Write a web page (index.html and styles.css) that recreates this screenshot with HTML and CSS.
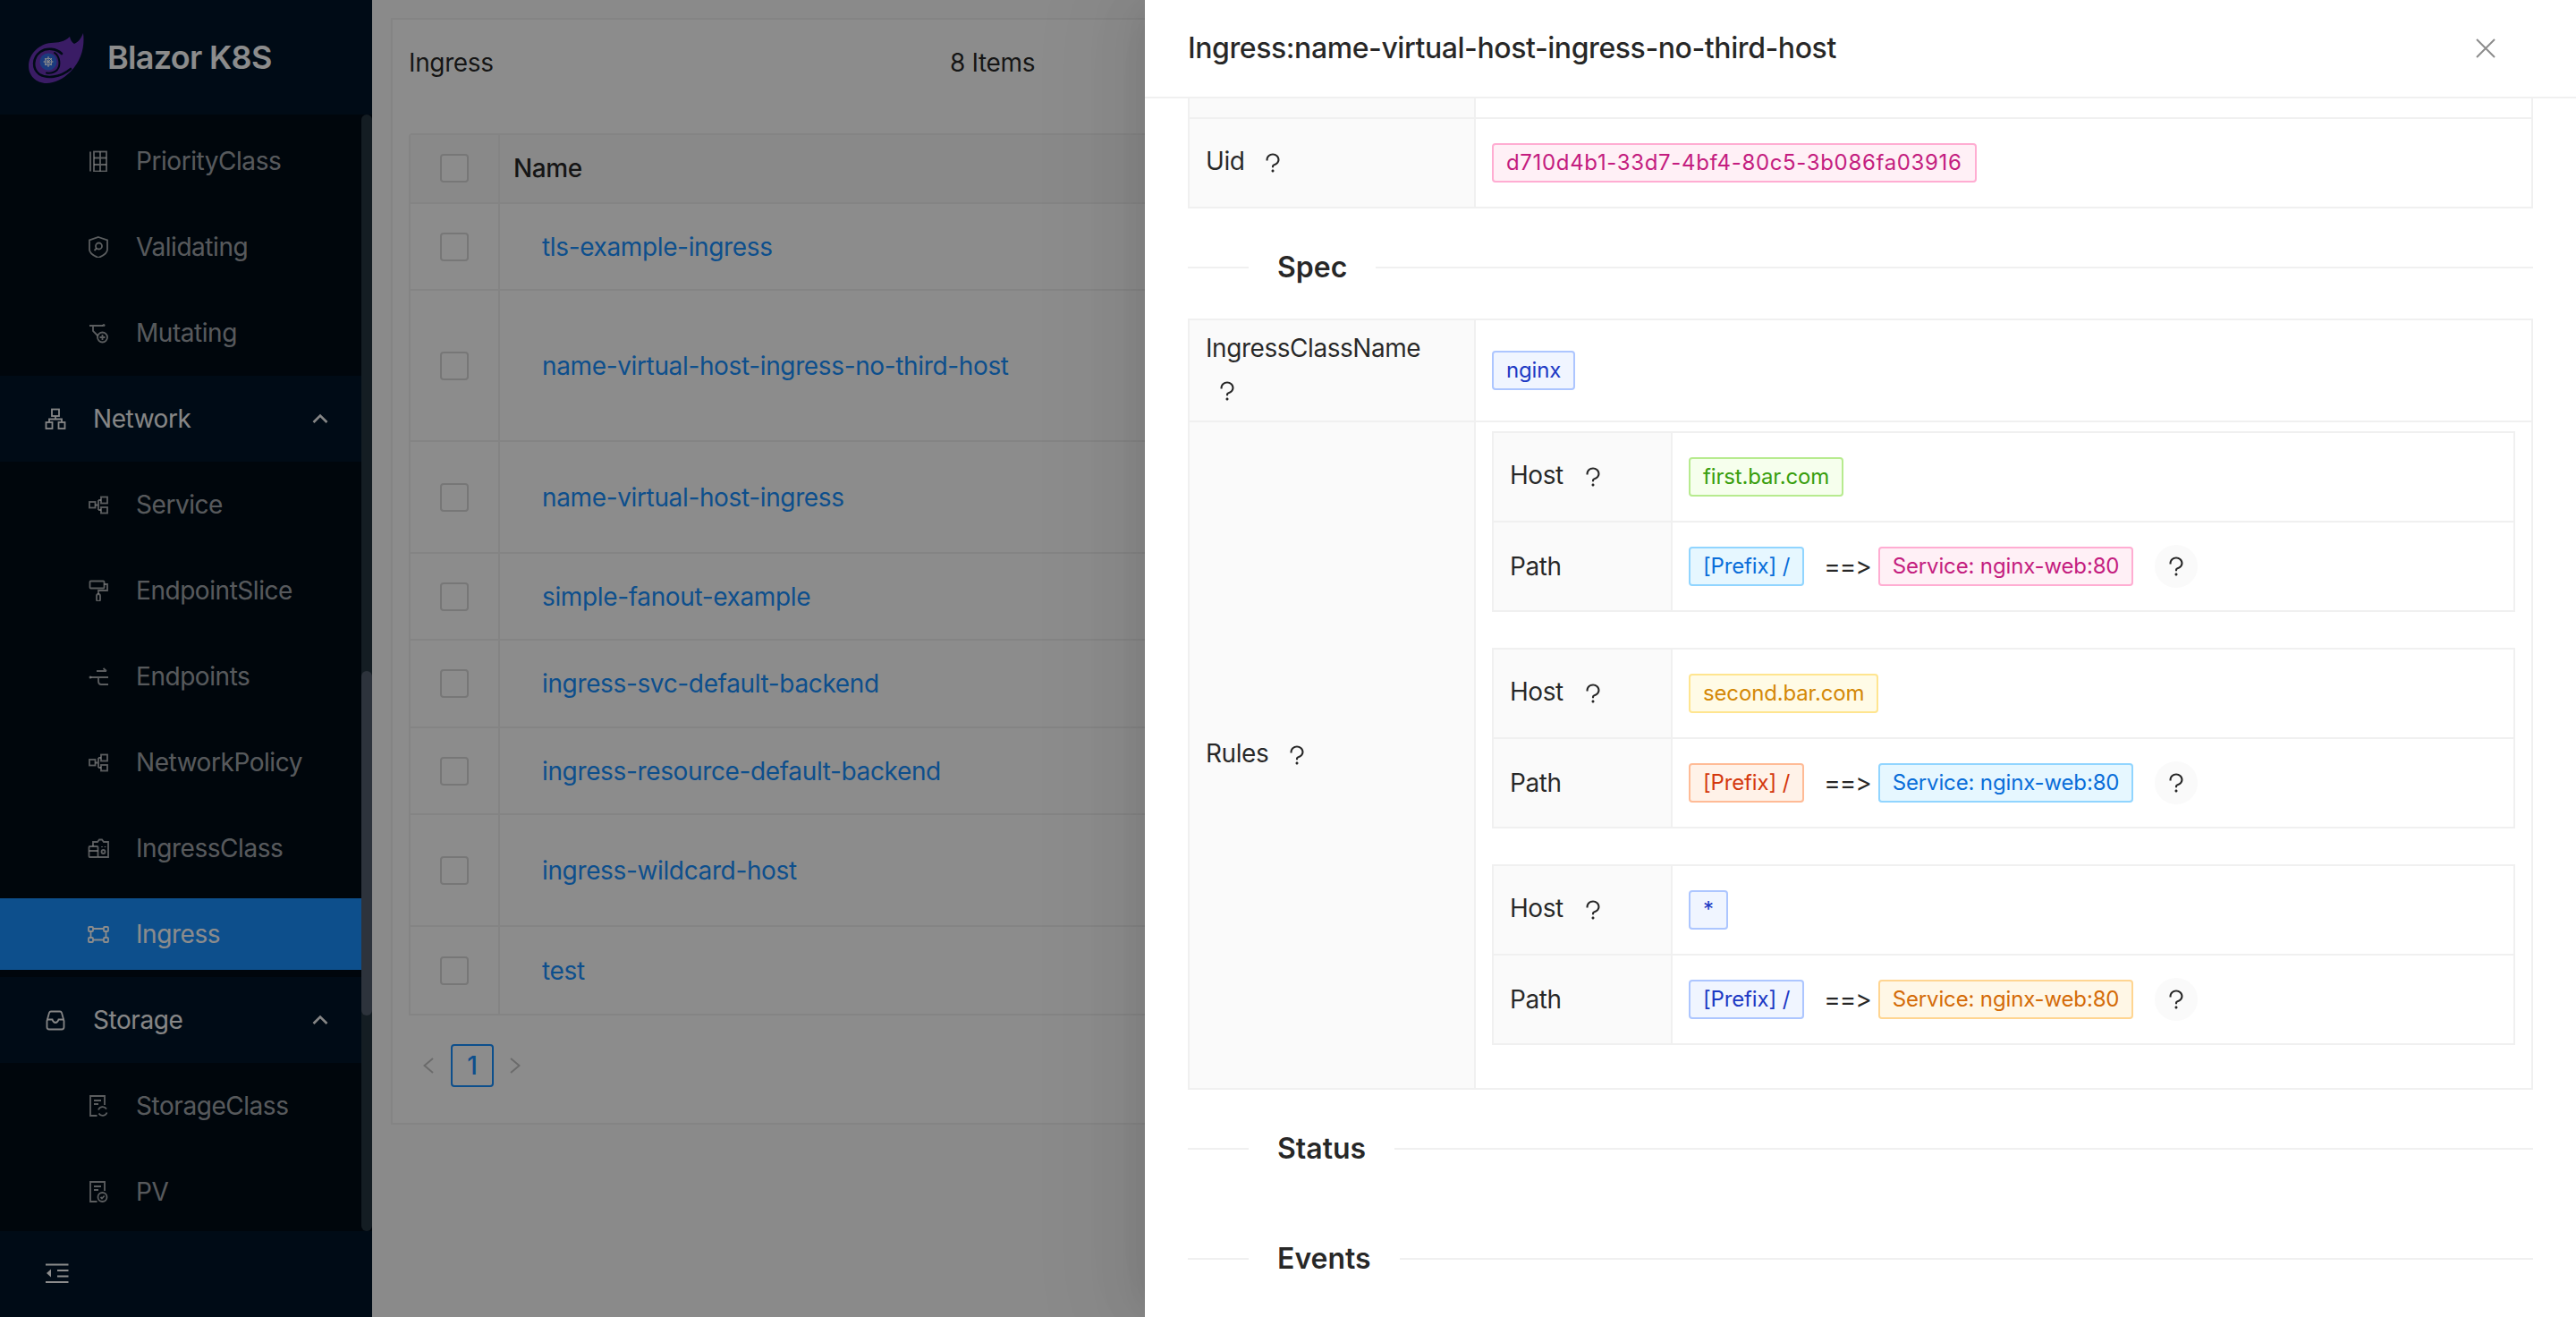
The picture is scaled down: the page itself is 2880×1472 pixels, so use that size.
FILE: index.html
```html
<!DOCTYPE html>
<html lang="en">
<head>
<meta charset="utf-8">
<title>Blazor K8S</title>
<link rel="stylesheet" href="styles.css">
</head>
<body>
<svg class="defs" width="0" height="0" aria-hidden="true">
  <defs>
    <symbol id="i-partition" viewBox="0 0 24 24"><rect x="2" y="9" width="6.5" height="6.5"/><rect x="15" y="3.5" width="7" height="7"/><rect x="15" y="15" width="7" height="6.5"/><path d="M8.5 12.5H12M12 7V18M12 7H15M12 18H15"/></symbol>
    <symbol id="q" viewBox="0 0 1024 1024"><path d="M764 280.9c-14-30.6-33.9-58.1-59.3-81.6C653.1 151.4 584.6 125 512 125s-141.1 26.4-192.7 74.2c-25.4 23.6-45.3 51-59.3 81.7-14.6 32-22 65.9-22 100.9v27c0 6.2 5 11.2 11.2 11.2h54c6.2 0 11.2-5 11.2-11.2v-27c0-99.5 88.6-180.4 197.6-180.4s197.6 80.9 197.6 180.4c0 40.8-14.5 79.2-42 111.2-27.2 31.7-65.6 54.4-108.1 64-24.3 5.5-46.2 19.2-61.7 38.8a110.85 110.85 0 0 0-23.9 68.6v31.4c0 6.2 5 11.2 11.2 11.2h54c6.2 0 11.2-5 11.2-11.2v-31.4c0-15.7 10.9-29.5 26-32.9 58.4-13.2 111.4-44.7 149.3-88.7 19.1-22.3 34-47.1 44.3-74 10.7-27.9 16.1-57.2 16.1-87 0-35-7.4-69-22-101zM512 787c-30.9 0-56 25.1-56 56s25.1 56 56 56 56-25.1 56-56-25.1-56-56-56z"/></symbol>
  </defs>
</svg>
<div class="app">
  <aside class="sider">
    <div class="brand">
      <svg class="logo" viewBox="7 7 62 56">
        <path class="logo-body" d="M68 7C70 22 66 38 54 50C46 58 36 63 27 63C15 63 7 54 7 44C7 30 19 19 32 18C40 17.5 47 17 53 11C54 15 55 17 58 19C63 17 66 12 68 7Z"/>
        <path class="logo-gap" d="M44 30C38 24 27 23 20 28C11 35 11 47 19 53C27 58 42 57 54 47"/>
        <path class="logo-gap thin" d="M36 29C42 33 43 43 39 48C36 51 31 52 27 51.500"/>
        <circle class="logo-k8s" cx="29" cy="39" r="9.500"/>
        <g class="logo-wheel"><circle cx="29" cy="39" r="4"/><path d="M29 33V45M23.500 39H34.500M25 35L33 43M33 35L25 43"/></g>
      </svg>
      <span class="brand-name">Blazor K8S</span>
    </div>
    <nav class="menu">
      <div class="sub sub-first">
        <a class="item"><svg class="ico" viewBox="0 0 24 24"><path d="M3 1.500V23.500"/><rect x="7" y="1.500" width="14" height="22"/><path d="M14 1.500V23.500M7 8.500H21M7 16H21"/></svg>PriorityClass</a>
        <a class="item"><svg class="ico" viewBox="0 0 24 24"><path d="M12 1L22 4.500V15C22 19 17 22 12 24C7 22 2 19 2 15V4.500Z"/><circle cx="12.500" cy="11" r="3.500"/><path d="M10 13.500L7.500 16"/></svg>Validating</a>
        <a class="item"><svg class="ico" viewBox="0 0 24 24"><path d="M2 4H17M6 4V10L11 15"/><circle class="dot" cx="18" cy="3.500" r="1.500"/><circle cx="16.500" cy="17" r="5.500"/><path d="M13.500 17H19.500M16.500 14V20"/></svg>Mutating</a>
      </div>
      <div class="parent"><div class="parent-in"><svg class="ico" viewBox="0 0 24 24"><rect x="8" y="1.500" width="8" height="7.500"/><rect x="1.500" y="16" width="7" height="7"/><rect x="15.500" y="16" width="7" height="7"/><path d="M12 9V12.500M5 16V12.500H19V16"/></svg><span class="parent-label">Network</span><svg class="chev" viewBox="0 0 18 12"><path d="M1.500 10L9 2.500L16.500 10"/></svg></div></div>
      <div class="sub">
        <a class="item"><svg class="ico"><use href="#i-partition"/></svg>Service</a>
        <a class="item"><svg class="ico" viewBox="0 0 24 24"><rect x="2.500" y="1.500" width="16" height="8" rx="1"/><path d="M18.500 5H22V12H12V16"/><rect x="10" y="16" width="4" height="8" rx="2"/></svg>EndpointSlice</a>
        <a class="item"><svg class="ico" viewBox="0 0 24 24"><path d="M10 6H21M17.500 3L21 6M3 13H23M12 13V17Q12 21 15 21H23"/><circle class="dot" cx="3" cy="13" r="1.500"/></svg>Endpoints</a>
        <a class="item"><svg class="ico"><use href="#i-partition"/></svg>NetworkPolicy</a>
        <a class="item"><svg class="ico" viewBox="0 0 24 24"><path d="M6 10V5H11L13 2.500H16L18 5H23V22H11.500"/><rect x="1.500" y="10" width="10" height="12" rx="1"/><path d="M1.500 15H11.500M16 10V11M19.500 10V11"/><circle cx="17.500" cy="16" r="2"/></svg>IngressClass</a>
        <a class="item item-active"><svg class="ico" viewBox="0 0 24 24"><rect x="1" y="4" width="5" height="5" rx="1"/><rect x="18" y="4" width="5" height="5" rx="1"/><rect x="1" y="16" width="5" height="5" rx="1"/><rect x="18" y="16" width="5" height="5" rx="1"/><path d="M6 6H18M6 18.500H18M3.500 9V16M20.500 9V16"/></svg>Ingress</a>
      </div>
      <div class="parent"><div class="parent-in"><svg class="ico" viewBox="0 0 24 24"><path d="M2.500 13V20Q2.500 22.500 5 22.500H19Q21.500 22.500 21.500 20V13L19 4Q18.500 2.500 17 2.500H7Q5.500 2.500 5 4Z"/><path d="M2.500 11.500H8.500Q9.500 15 12 15Q14.500 15 15.500 11.500H21.500"/></svg><span class="parent-label">Storage</span><svg class="chev" viewBox="0 0 18 12"><path d="M1.500 10L9 2.500L16.500 10"/></svg></div></div>
      <div class="sub">
        <a class="item"><svg class="ico" viewBox="0 0 24 24"><path d="M10.500 23H3V1H19V11"/><path d="M7 6H15M7 10H12"/><path d="M12 16.500A5 5 0 0 1 21 15.500M21.500 19.500A5 5 0 0 1 12.500 20.500"/></svg>StorageClass</a>
        <a class="item"><svg class="ico" viewBox="0 0 24 24"><path d="M10.500 23H3V1H19V11"/><path d="M7 6H15M7 10H12"/><circle cx="16.500" cy="18" r="5"/><path d="M14.500 18L16 19.500L18.700 16.500"/></svg>PV</a>
      </div>
      <div class="scroll-track"><div class="scroll-thumb"></div></div>
    </nav>
    <div class="sider-foot"><svg class="fold" viewBox="0 0 26 22"><path d="M0 1.500H25.500M13 8H25.500M13 14.500H25.500M0 21H25.500"/><path class="fold-tri" d="M1 11L6 6.500V15.500Z"/></svg></div>
  </aside>

  <main class="main">
    <section class="card">
      <header class="card-head"><span class="card-title">Ingress</span><span>8 Items</span></header>
      <div class="tbl">
        <div class="td td-check th"><span class="check"></span></div><div class="td th th-name">Name</div>
        <div class="td td-check"><span class="check"></span></div><div class="td td-name"><a class="link">tls-example-ingress</a></div>
        <div class="td td-check"><span class="check"></span></div><div class="td td-name"><a class="link">name-virtual-host-ingress-no-third-host</a></div>
        <div class="td td-check"><span class="check"></span></div><div class="td td-name"><a class="link">name-virtual-host-ingress</a></div>
        <div class="td td-check"><span class="check"></span></div><div class="td td-name"><a class="link">simple-fanout-example</a></div>
        <div class="td td-check"><span class="check"></span></div><div class="td td-name"><a class="link">ingress-svc-default-backend</a></div>
        <div class="td td-check"><span class="check"></span></div><div class="td td-name"><a class="link">ingress-resource-default-backend</a></div>
        <div class="td td-check"><span class="check"></span></div><div class="td td-name"><a class="link">ingress-wildcard-host</a></div>
        <div class="td td-check"><span class="check"></span></div><div class="td td-name"><a class="link">test</a></div>
      </div>
      <div class="pager">
        <svg class="pg-arrow" viewBox="0 0 12 18"><path d="M11 1L1.500 9L11 17"/></svg>
        <span class="pg-num">1</span>
        <svg class="pg-arrow" viewBox="0 0 12 18"><path d="M1 1L10.500 9L1 17"/></svg>
      </div>
    </section>
  </main>
</div>

<div class="mask"></div>

<aside class="drawer">
  <header class="drawer-head">
    <span class="drawer-title">Ingress:name-virtual-host-ingress-no-third-host</span>
    <svg class="close" viewBox="0 0 22 22"><path d="M1 1L21 21M21 1L1 21"/></svg>
  </header>
  <div class="drawer-body">
    <div class="desc desc-cut">
      <div class="row row-cut"><div class="lab"></div><div class="val"></div></div>
      <div class="row row-uid">
        <div class="lab"><span class="lab-q">Uid <svg class="q"><use href="#q"/></svg></span></div>
        <div class="val"><span class="tag tag-uid magenta">d710d4b1-33d7-4bf4-80c5-3b086fa03916</span></div>
      </div>
    </div>

    <div class="divider"><span class="div-text">Spec</span></div>

    <div class="desc">
      <div class="row row-class">
        <div class="lab"><span class="lab-q lab-wrap">IngressClassName <svg class="q"><use href="#q"/></svg></span></div>
        <div class="val"><span class="tag geekblue">nginx</span></div>
      </div>
      <div class="row">
        <div class="lab"><span class="lab-q">Rules <svg class="q"><use href="#q"/></svg></span></div>
        <div class="val val-rules">
          <div class="rule">
            <div class="rule-row"><div class="lab lab-in"><span class="lab-q">Host <svg class="q"><use href="#q"/></svg></span></div><div class="val"><span class="tag green">first.bar.com</span></div></div>
            <div class="rule-row"><div class="lab lab-in">Path</div><div class="val"><span class="tag tag-prefix blue">[Prefix] /</span><span class="arrow">==&gt;</span><span class="tag magenta">Service: nginx-web:80</span><span class="q-round"><svg class="q"><use href="#q"/></svg></span></div></div>
          </div>
          <div class="rule">
            <div class="rule-row"><div class="lab lab-in"><span class="lab-q">Host <svg class="q"><use href="#q"/></svg></span></div><div class="val"><span class="tag gold">second.bar.com</span></div></div>
            <div class="rule-row"><div class="lab lab-in">Path</div><div class="val"><span class="tag tag-prefix volcano">[Prefix] /</span><span class="arrow">==&gt;</span><span class="tag blue">Service: nginx-web:80</span><span class="q-round"><svg class="q"><use href="#q"/></svg></span></div></div>
          </div>
          <div class="rule">
            <div class="rule-row"><div class="lab lab-in"><span class="lab-q">Host <svg class="q"><use href="#q"/></svg></span></div><div class="val"><span class="tag geekblue">*</span></div></div>
            <div class="rule-row"><div class="lab lab-in">Path</div><div class="val"><span class="tag tag-prefix geekblue">[Prefix] /</span><span class="arrow">==&gt;</span><span class="tag orange">Service: nginx-web:80</span><span class="q-round"><svg class="q"><use href="#q"/></svg></span></div></div>
          </div>
        </div>
      </div>
    </div>

    <div class="divider"><span class="div-text">Status</span></div>
    <div class="divider"><span class="div-text">Events</span></div>
  </div>
</aside>
</body>
</html>
```

FILE: styles.css
```css
* { box-sizing: border-box; }
html, body { margin: 0; height: 100%; }
body {
  position: relative;
  width: 2880px;
  height: 1472px;
  overflow: hidden;
  font-family: Inter, "Noto Sans", "Liberation Sans", sans-serif;
  font-size: 28px;
  line-height: 44px;
  letter-spacing: -.36px;
  font-feature-settings: "calt" 0;
  color: rgba(0, 0, 0, .85);
  background: #fbfbfb;
}
.defs { position: absolute; }
.app { display: flex; height: 1472px; }

/* sidebar */
.sider { width: 416px; flex: none; display: flex; flex-direction: column; background: #001529; color: #fff; }
.brand { height: 128px; flex: none; display: flex; align-items: center; padding-left: 32px; }
.logo { width: 62px; height: 56px; margin-right: 26px; margin-top: 2px; }
.logo-body { fill: #6a34b8; }
.logo-gap { fill: none; stroke: #001529; stroke-width: 2.6; stroke-linecap: round; }
.logo-gap.thin { stroke-width: 2; }
.logo-k8s { fill: #326ce5; }
.logo-wheel { fill: none; stroke: #fff; stroke-width: 1; }
.brand-name { font-size: 36px; font-weight: 600; letter-spacing: -.7px; }
.menu { position: relative; flex: 1; min-height: 0; overflow: hidden; letter-spacing: -.45px; }
.sub { background: #000c17; padding: 8px 0; display: flex; flex-direction: column; gap: 16px; }
.sub-first { padding-top: 12px; }
.item { height: 80px; flex: none; display: flex; align-items: center; padding-left: 98px; color: rgba(255, 255, 255, .65); }
.item-active { background: #1890ff; color: #fff; }
.ico { width: 24px; height: 24px; margin-right: 30px; flex: none; fill: none; stroke: currentColor; stroke-width: 1.8; }
.ico .dot { fill: currentColor; stroke: none; }
.parent { padding: 8px 0; }
.parent-in { height: 80px; display: flex; align-items: center; padding-left: 50px; color: #f4f4f4; }
.parent-label { flex: 1; }
.chev { width: 18px; height: 12px; margin-right: 49px; fill: none; stroke: currentColor; stroke-width: 2.6; }
.scroll-track { position: absolute; top: 0; right: 0; bottom: 0; width: 12px; border-radius: 6px; background: #263541; }
.scroll-thumb { position: absolute; top: 622px; left: 0; width: 12px; height: 385px; border-radius: 6px; background: #525e6d; }
.sider-foot { height: 96px; flex: none; display: flex; align-items: center; padding: 0 0 2px 51px; }
.fold { width: 26px; height: 22px; fill: none; stroke: #fff; stroke-width: 2; }
.fold-tri { fill: #fff; stroke: none; }

/* main */
.main { flex: 1; min-width: 0; padding: 20px 0 0 21px; }
.card { width: 2420px; height: 1237px; border: 2px solid #f0f0f0; padding: 0 18px; background: #fff; }
.card-head { height: 96px; display: flex; align-items: center; margin-bottom: 31px; }
.card-title { width: 605px; }
.tbl {
  display: grid;
  grid-template-columns: 100px 1fr;
  grid-template-rows: 77px 97px 169px 125px 97px 98px 97px 125px 99px;
  border: solid #f0f0f0;
  border-width: 2px 0 0 2px;
  border-radius: 4px 0 0 0;
}
.td { display: flex; align-items: center; border-bottom: 2px solid #f0f0f0; }
.td-check { justify-content: center; border-right: 2px solid #f0f0f0; }
.th { background: #fafafa; padding-bottom: 2px; }
.th-name { padding-left: 15px; font-weight: 500; }
.td-name { padding-left: 47px; }
.link { color: #1890ff; }
.check { width: 32px; height: 32px; border: 2px solid #d9d9d9; border-radius: 4px; background: #fff; }
.pager { display: flex; align-items: center; margin-top: 32px; padding-left: 16px; height: 48px; }
.pg-arrow { width: 12px; height: 18px; fill: none; stroke: #c4c4c4; stroke-width: 2; }
.pg-num { width: 48px; height: 48px; margin: 0 18px 0 19px; border: 2px solid #1890ff; border-radius: 4px; color: #1890ff; display: flex; align-items: center; justify-content: center; font-weight: 500; }

/* mask + drawer */
.mask { position: absolute; inset: 0; background: rgba(0, 0, 0, .45); }
.drawer {
  position: absolute;
  top: 0;
  right: 0;
  width: 1600px;
  height: 1472px;
  display: flex;
  flex-direction: column;
  background: #fff;
  box-shadow: -12px 0 32px -16px rgba(0, 0, 0, .08), -18px 0 56px rgba(0, 0, 0, .05), -24px 0 96px 32px rgba(0, 0, 0, .03);
}
.drawer-head { height: 110px; flex: none; display: flex; align-items: center; justify-content: space-between; padding: 0 90px 0 48px; border-bottom: 2px solid #f0f0f0; }
.drawer-title { font-size: 32px; font-weight: 500; letter-spacing: -.43px; }
.close { width: 22px; height: 22px; fill: none; stroke: #8c8c8c; stroke-width: 2; }
.drawer-body { flex: 1; min-height: 0; overflow: hidden; padding: 0 48px; display: flex; flex-direction: column; }

.desc { border: solid #f0f0f0; border-width: 2px 2px 0; flex: none; }
.desc-cut { border-top: 0; }
.row { display: grid; grid-template-columns: 320px 1fr; border-bottom: 2px solid #f0f0f0; }
.row-cut { height: 23px; }
.row-uid { height: 100px; }
.row-class { height: 114px; }
.lab { background: #fafafa; border-right: 2px solid #f0f0f0; padding: 0 18px; display: flex; align-items: center; letter-spacing: -.45px; }
.lab-q { display: block; padding-bottom: 4px; }
.lab-wrap { line-height: 46px; }
.val { display: flex; align-items: center; padding: 0 18px; }
.val-rules { display: block; padding: 10px 18px 8px; }
.q { width: 28px; height: 28px; margin-left: 10px; vertical-align: -6px; fill: rgba(0, 0, 0, .85); }
.tag {
  height: 44px;
  padding: 0 14px;
  border: 2px solid;
  border-radius: 4px;
  font-size: 24px;
  line-height: 40px;
  letter-spacing: -.15px;
  white-space: nowrap;
  flex: none;
}
.tag-uid { letter-spacing: .66px; }
.tag-prefix { margin-right: 22px; }
.magenta { color: #c41d7f; background: #fff0f6; border-color: #ffadd2; }
.blue { color: #096dd9; background: #e6f7ff; border-color: #91d5ff; }
.green { color: #389e0d; background: #f6ffed; border-color: #b7eb8f; }
.gold { color: #d48806; background: #fffbe6; border-color: #ffe58f; }
.volcano { color: #d4380d; background: #fff2e8; border-color: #ffbb96; }
.geekblue { color: #1d39c4; background: #f0f5ff; border-color: #adc6ff; }
.orange { color: #d46b08; background: #fff7e6; border-color: #ffd591; }
.arrow { margin-right: 8px; letter-spacing: -1px; }
.q-round { width: 48px; height: 48px; margin-left: 24px; border-radius: 50%; background: #fafafa; display: flex; align-items: center; justify-content: center; flex: none; }
.q-round .q { margin: 0; }

.rule { border: solid #f0f0f0; border-width: 2px 2px 0; margin-bottom: 40px; }
.rule-row { height: 100px; display: grid; grid-template-columns: 200px 1fr; border-bottom: 2px solid #f0f0f0; }
.lab-in { padding: 0 18px; }
.lab-in .q { margin-left: 12px; }

.divider { height: 40px; flex: none; margin: 46px 0 37px; display: flex; align-items: center; font-size: 32px; font-weight: 600; letter-spacing: 0; }
.divider::before { content: ""; width: 68px; height: 2px; background: #f0f0f0; flex: none; }
.divider::after { content: ""; flex: 1; height: 2px; background: #f0f0f0; }
.div-text { padding: 0 32px; }
```
